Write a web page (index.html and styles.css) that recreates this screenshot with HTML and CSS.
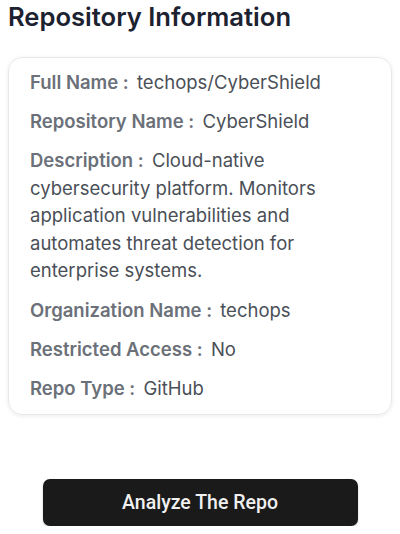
FILE: index.html
```html
<!DOCTYPE html>
<html>
<head>
<meta charset="utf-8">
<link rel="stylesheet" href="styles.css">
</head>
<body>
<div class="page">
  <h1 class="title">Repository Information</h1>
  <div class="card">
    <div class="row"><span class="label">Full Name :</span> <span class="value">techops/CyberShield</span></div>
    <div class="row"><span class="label">Repository Name :</span> <span class="value">CyberShield</span></div>
    <p class="row row-long"><span class="label">Description :</span> Cloud-native cybersecurity platform. Monitors application vulnerabilities and automates threat detection for enterprise systems.</p>
    <div class="row"><span class="label">Organization Name :</span> <span class="value">techops</span></div>
    <div class="row"><span class="label">Restricted Access :</span> <span class="value">No</span></div>
    <div class="row"><span class="label">Repo Type :</span> <span class="value">GitHub</span></div>
  </div>
  <div class="actions">
    <button class="btn">Analyze The Repo</button>
  </div>
</div>
</body>
</html>
```
FILE: styles.css
```css
* { box-sizing: border-box; }
html, body { margin: 0; padding: 0; background: #ffffff; }
body { font-family: Inter, "Noto Sans", sans-serif; }
.page { padding: 0 8px; }
.title {
  margin: 0;
  padding-top: 1px;
  font-size: 25.6px;
  line-height: 32px;
  font-weight: 600;
  color: #1c2230;
}
.card {
  margin-top: 24px;
  width: 384px;
  border: 1px solid #e7e8eb;
  border-radius: 14px;
  box-shadow: 0 1px 4px rgba(0,0,0,0.08);
  padding: 11px 20px 13px 21px;
  display: flex;
  flex-direction: column;
  gap: 13px;
}
.row {
  margin: 0;
  font-size: 18.5px;
  line-height: 26px;
  color: #4a4f57;
}
.row-long { line-height: 27.5px; margin-bottom: -1px; }
.label {
  font-weight: 600;
  color: #6b7079;
  margin-right: 3px;
}
.value { font-weight: 400; color: #4a4f57; }
.actions {
  display: flex;
  justify-content: center;
  margin-top: 64px;
}
.btn {
  width: 315px;
  height: 47px;
  border: none;
  border-radius: 7px;
  background: #1a1a1a;
  color: #f0f0f0;
  font-family: Roboto, "Liberation Sans", sans-serif;
  font-weight: 500;
  font-size: 19.5px;
  box-shadow: 0 1px 2px rgba(0,0,0,0.25);
}
```
